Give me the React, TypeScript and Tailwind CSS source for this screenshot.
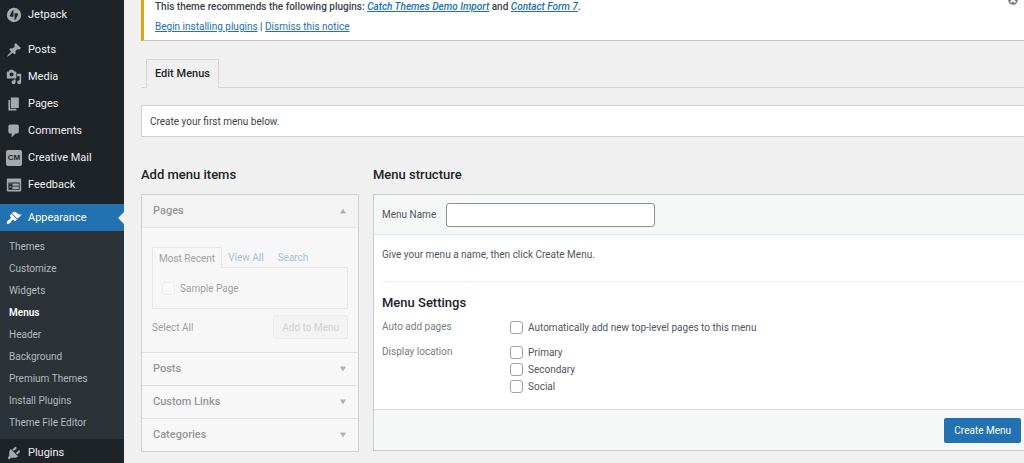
import type { ReactNode } from "react";

const ICONS = {
  jetpack:
    "M10 1a9 9 0 1 0 0 18 9 9 0 0 0 0-18zM9.3 12.2H6.2c-1.2-.3-1.6-1.2-1.1-2.2l2.6-5c.4-.7 1-1.1 1.6-1.1v8.3zM10.7 16.1V7.8h3.1c1.2.3 1.6 1.2 1.1 2.2l-2.6 5c-.4.7-1 1.1-1.6 1.1z",
  posts:
    "M10.44 3.02l1.82-1.82 6.36 6.35-1.83 1.82c-1.05-.68-2.48-.57-3.41.36l-.75.75c-.92.93-1.04 2.35-.35 3.41l-1.83 1.82-2.41-2.41-2.8 2.79c-.42.42-3.38 2.71-3.8 2.29s1.86-3.39 2.28-3.81l2.79-2.79L4.1 9.36l1.83-1.82c1.05.69 2.48.57 3.4-.36l.75-.75c.93-.92 1.05-2.35.36-3.41z",
  media:
    "M13 11V4c0-.55-.45-1-1-1h-1.67L9 1H5L3.67 3H2c-.55 0-1 .45-1 1v7c0 .55.45 1 1 1h10c.55 0 1-.45 1-1zM7 4.5c1.38 0 2.5 1.12 2.5 2.5S8.38 9.5 7 9.5 4.5 8.38 4.5 7 5.62 4.5 7 4.5zM14 6h5v10.5c0 1.38-1.12 2.5-2.5 2.5S14 17.88 14 16.5s1.12-2.5 2.5-2.5c.17 0 .34.02.5.05V9h-3V6zm-4 8.05V13h2v3.5c0 1.38-1.12 2.5-2.5 2.5S7 17.88 7 16.5 8.12 14 9.5 14c.17 0 .34.02.5.05z",
  pages: "M6 15V2h10v13H6zm-1 1h8v2H3V5h2v11z",
  comments:
    "M5 2h9c1.1 0 2 .9 2 2v7c0 1.1-.9 2-2 2h-2l-5 5v-5H5c-1.1 0-2-.9-2-2V4c0-1.1.9-2 2-2z",
  feedback:
    "M2 2h16c.55 0 1 .45 1 1v14c0 .55-.45 1-1 1H2c-.55 0-1-.45-1-1V3c0-.55.45-1 1-1zm15 14V7H3v9h14zM4 8v1h3V8H4zm4 0v3h8V8H8zm-4 4v1h3v-1H4zm4 0v3h8v-3H8z",
  appearance:
    "M14.48 11.06L7.41 3.99l1.5-1.5c.5-.56 2.3-.47 3.51.32 1.21.8 1.43 1.28 2.91 2.1 1.18.64 2.45 1.26 4.45.85zm-.71.71L6.7 4.7 4.93 6.47c-.39.39-.39 1.02 0 1.41l1.06 1.06c.39.39.39 1.03 0 1.42-.6.6-1.43 1.11-2.21 1.69-.35.26-.7.53-1.01.84C1.43 14.23.4 16.08 1.4 17.07c.99 1 2.84-.03 4.18-1.36.31-.31.58-.66.85-1.02.57-.78 1.08-1.61 1.69-2.21.39-.39 1.02-.39 1.41 0l1.06 1.06c.39.39 1.02.39 1.41 0z",
  plugins:
    "M13.11 4.36L9.87 7.6 8 5.73l3.24-3.24c.35-.34 1.05-.2 1.56.32.52.51.66 1.21.31 1.55zm-8 1.77l.91-1.12 9.01 9.01-1.19.84c-.71.71-2.63 1.16-3.82 1.16H6.14L4.9 17.26c-.59.59-1.54.59-2.12 0-.59-.58-.59-1.53 0-2.12l1.24-1.24v-3.88c0-1.13.4-3.19 1.09-3.89zm7.26 3.97l3.24-3.24c.34-.35 1.04-.21 1.55.31.52.51.66 1.21.31 1.55l-3.24 3.25z",
  dismiss:
    "M10 2c4.42 0 8 3.58 8 8s-3.58 8-8 8-8-3.58-8-8 3.58-8 8-8zm5 11l-3-3 3-3-2-2-3 3-3-3-2 2 3 3-3 3 2 2 3-3 3 3z",
};

type IconName = keyof typeof ICONS;

const CONTENT_LINKS: { label: string; icon: IconName | "cm" }[] = [
  { label: "Posts", icon: "posts" },
  { label: "Media", icon: "media" },
  { label: "Pages", icon: "pages" },
  { label: "Comments", icon: "comments" },
  { label: "Creative Mail", icon: "cm" },
  { label: "Feedback", icon: "feedback" },
];

const APPEARANCE_LINKS = [
  "Themes",
  "Customize",
  "Widgets",
  "Menus",
  "Header",
  "Background",
  "Premium Themes",
  "Install Plugins",
  "Theme File Editor",
];

const LOCATIONS = ["Primary", "Secondary", "Social"];

function Icon({ name, className }: { name: IconName; className?: string }) {
  return (
    <svg viewBox="0 0 20 20" fill="currentColor" fillRule="evenodd" className={className} aria-hidden="true">
      <path d={ICONS[name]} />
    </svg>
  );
}

function SidebarLink({ label, icon, active }: { label: string; icon: IconName | "cm"; active?: boolean }) {
  return (
    <a
      href="#"
      className={`relative flex h-[27px] items-center gap-1.5 pl-1.5 text-[11px] leading-4 ${
        active ? "bg-[#2271b1] text-white" : "text-[#f0f0f1]"
      }`}
    >
      {icon === "cm" ? (
        <span className="flex size-4 items-center justify-center rounded-xs bg-[#a7aaad] font-['Liberation_Sans'] text-[8px] font-bold text-[#1d2327]">
          CM
        </span>
      ) : (
        <Icon name={icon} className={active ? "size-4" : "size-4 text-[#a7aaad]"} />
      )}
      {label}
      {active && (
        <span className="absolute top-1/2 right-0 size-0 -translate-y-1/2 border-y-6 border-r-6 border-y-transparent border-r-[#f0f0f1]" />
      )}
    </a>
  );
}

function Sidebar() {
  return (
    <nav className="w-[124px] shrink-0 bg-[#1d2327] pt-px">
      <SidebarLink label="Jetpack" icon="jetpack" />
      <div className="pt-2 pb-1.5">
        {CONTENT_LINKS.map((link) => (
          <SidebarLink key={link.label} {...link} />
        ))}
      </div>
      <SidebarLink label="Appearance" icon="appearance" active />
      <ul className="bg-[#2c3338] pt-1 pb-1.5">
        {APPEARANCE_LINKS.map((label) => (
          <li key={label}>
            <a
              href="#"
              className={`flex h-[22px] items-center pl-[9px] text-[10px] ${
                label === "Menus" ? "font-semibold text-white" : "text-[#b4b9be]"
              }`}
            >
              {label}
            </a>
          </li>
        ))}
      </ul>
      <SidebarLink label="Plugins" icon="plugins" />
    </nav>
  );
}

function TextLink({ children }: { children: ReactNode }) {
  return (
    <a href="#" className="text-[#2271b1] underline">
      {children}
    </a>
  );
}

function Notice() {
  return (
    <div className="relative flex flex-col border-b border-l-3 border-b-[#c3c4c7] border-l-[#dba617] bg-white pb-[3px] pl-[11px] leading-5">
      <p className="-mt-[3px] font-medium text-[#3c434a]">
        This theme recommends the following plugins:{" "}
        <em>
          <TextLink>Catch Themes Demo Import</TextLink>
        </em>{" "}
        and{" "}
        <em>
          <TextLink>Contact Form 7</TextLink>
        </em>
        .
      </p>
      <p>
        <TextLink>Begin installing plugins</TextLink> | <TextLink>Dismiss this notice</TextLink>
      </p>
      <button type="button" aria-label="Dismiss" className="absolute -top-1.5 right-[5px] text-[#787c82]">
        <Icon name="dismiss" className="size-3" />
      </button>
    </div>
  );
}

function Checkbox({ label }: { label: string }) {
  return (
    <label className="flex h-[17px] items-center gap-[5px]">
      <input type="checkbox" className="size-[13px] appearance-none rounded-[3px] border border-[#9fa2a6] bg-white" />
      {label}
    </label>
  );
}

function AccordionHeader({ label, open }: { label: string; open?: boolean }) {
  return (
    <button
      type="button"
      disabled
      aria-expanded={!!open}
      className={`flex h-[33px] w-full items-center justify-between px-[11px] text-[11px] leading-4 font-medium text-[#96989a] ${
        open ? "border-b border-[#e6e6e7] bg-[#f3f3f3]" : "border-t border-[#e0e0e1]"
      }`}
    >
      {label}
      <svg viewBox="0 0 8 6" className="h-1.5 w-2" fill="#b0b1b3" aria-hidden="true">
        <path d={open ? "M4 .5L7 5.5H1z" : "M4 5.5L7 .5H1z"} />
      </svg>
    </button>
  );
}

function AddMenuItems() {
  return (
    <section className="w-[218px] shrink-0">
      <h2 className="text-[13px] leading-5 font-medium text-[#1d2327]">Add menu items</h2>
      <div className="mt-[9px] border border-[#d0d1d3] bg-[#f7f7f7] text-[#a0a2a5]">
        <AccordionHeader label="Pages" open />
        <div className="px-2.5 pt-[19px] pb-[13px]">
          <div className="flex h-5">
            <button
              type="button"
              disabled
              className="-mb-px h-[21px] border border-b-0 border-[#e6e6e7] bg-[#f7f7f7] px-1.5"
            >
              Most Recent
            </button>
            <button type="button" disabled className="px-1.5 text-[#a3c1dc]">
              View All
            </button>
            <button type="button" disabled className="px-2 text-[#a3c1dc]">
              Search
            </button>
          </div>
          <div className="border border-[#e6e6e7] px-[9px] py-3">
            <label className="flex h-4 items-center gap-[5px]">
              <input
                type="checkbox"
                disabled
                className="size-[13px] appearance-none rounded-[3px] border border-[#ebebec] bg-[#f9f9f9]"
              />
              Sample Page
            </label>
          </div>
          <div className="mt-1.5 flex items-center justify-between">
            <span>Select All</span>
            <button
              type="button"
              disabled
              className="h-6 rounded-xs border border-[#ebebec] bg-[#f3f3f3] px-2 text-[#d0d1d2]"
            >
              Add to Menu
            </button>
          </div>
        </div>
        <AccordionHeader label="Posts" />
        <AccordionHeader label="Custom Links" />
        <AccordionHeader label="Categories" />
      </div>
    </section>
  );
}

function MenuStructure() {
  return (
    <section className="min-w-0 flex-1">
      <h2 className="text-[13px] leading-5 font-medium text-[#1d2327]">Menu structure</h2>
      <form className="mt-[9px] border border-r-0 border-[#c9cacd] bg-white text-[#50575e]">
        <div className="flex h-10 items-center border-b border-[#e6e7e8] bg-[#f6f7f7] pl-2">
          <label htmlFor="menu-name" className="w-16">
            Menu Name
          </label>
          <input
            id="menu-name"
            type="text"
            className="h-6 w-[209px] rounded-[3px] border border-[#8c8f94] bg-white px-2"
          />
        </div>
        <div className="pt-3 pb-3.5 pl-2">
          <p className="leading-4">Give your menu a name, then click Create Menu.</p>
          <div className="mt-[18px] border-t border-[#f0f0f1] pt-[11px]">
            <h3 className="text-[13px] leading-5 font-medium text-[#1d2327]">Menu Settings</h3>
            <div className="mt-1.5 grid grid-cols-[128px_1fr] gap-y-2">
              <span className="leading-4 text-[#787c82]">Auto add pages</span>
              <Checkbox label="Automatically add new top-level pages to this menu" />
              <span className="leading-4 text-[#787c82]">Display location</span>
              <div>
                {LOCATIONS.map((label) => (
                  <Checkbox key={label} label={label} />
                ))}
              </div>
            </div>
          </div>
        </div>
        <div className="flex h-[41px] items-center justify-end border-t border-[#dcdcde] bg-[#f6f7f7] pr-[3px]">
          <button type="button" className="h-[25px] rounded-xs bg-[#2271b1] px-2.5 text-white">
            Create Menu
          </button>
        </div>
      </form>
    </section>
  );
}

export default function App() {
  return (
    <div className="flex h-screen overflow-hidden bg-[#f0f0f1] font-['Roboto',sans-serif] text-[10px] text-[#3c434a]">
      <Sidebar />
      <main className="min-w-0 flex-1 pl-[17px]">
        <Notice />
        <div className="mt-[18px] flex border-b border-[#d5d6d8] pl-[5px]">
          <a
            href="#"
            className="-mb-px flex h-[29px] items-center border border-b-0 border-[#d5d6d8] bg-[#f0f0f1] px-2 text-[11px] font-medium text-[#1d2327]"
          >
            Edit Menus
          </a>
        </div>
        <div className="mt-[17px] flex h-8 items-center border border-r-0 border-[#d0d1d3] bg-white pl-2">
          Create your first menu below.
        </div>
        <div className="mt-7 flex gap-3.5">
          <AddMenuItems />
          <MenuStructure />
        </div>
      </main>
    </div>
  );
}
